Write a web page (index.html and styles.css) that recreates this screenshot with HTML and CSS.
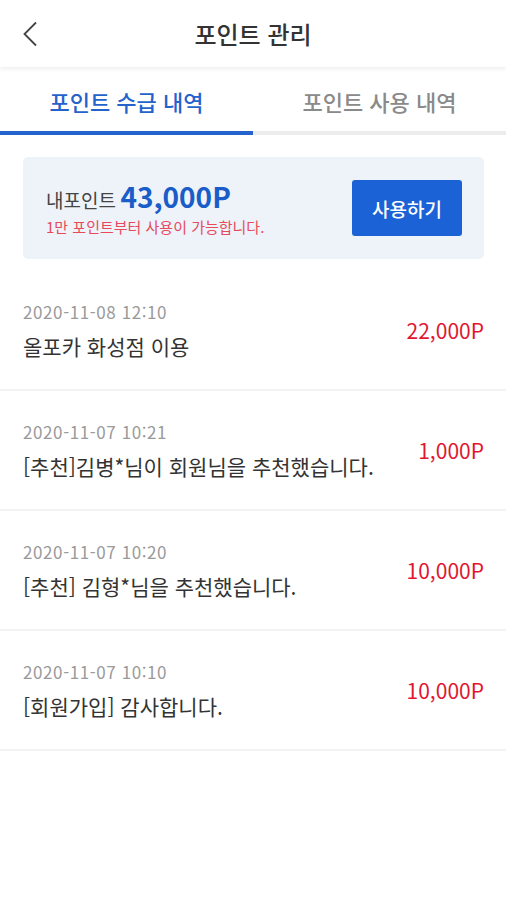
FILE: index.html
```html
<!DOCTYPE html>
<html lang="ko">
<head>
    <meta charset="UTF-8">
    <meta name="viewport" content="width=device-width, initial-scale=1.0">
    <title>포인트 관리</title>
    <link rel="stylesheet" href="styles.css">
</head>
<body>
    <!-- Header -->
    <header class="header">
        <button class="back-btn" aria-label="뒤로">
            <svg width="18" height="26" viewBox="0 0 18 26">
                <path d="M15 1.5 L3.5 13 L15 24.5" fill="none" stroke="#444" stroke-width="1.8"/>
            </svg>
        </button>
        <h1 class="title">포인트 관리</h1>
        <span></span>
    </header>

    <!-- Tabs -->
    <nav class="tabs">
        <div class="tab active">포인트 수급 내역</div>
        <div class="tab">포인트 사용 내역</div>
    </nav>

    <!-- My Point -->
    <section class="point-card">
        <div class="point-info">
            <p class="point-line"><span class="point-label">내포인트</span> <strong class="point-value">43,000P</strong></p>
            <p class="point-notice">1만 포인트부터 사용이 가능합니다.</p>
        </div>
        <button class="use-btn">사용하기</button>
    </section>

    <!-- History -->
    <ul class="history">
        <li class="history-item">
            <div class="item-text">
                <span class="item-date">2020-11-08 12:10</span>
                <span class="item-title">올포카 화성점 이용</span>
            </div>
            <span class="item-amount">22,000P</span>
        </li>
        <li class="history-item">
            <div class="item-text">
                <span class="item-date">2020-11-07 10:21</span>
                <span class="item-title">[추천]김병*님이 회원님을 추천했습니다.</span>
            </div>
            <span class="item-amount">1,000P</span>
        </li>
        <li class="history-item">
            <div class="item-text">
                <span class="item-date">2020-11-07 10:20</span>
                <span class="item-title">[추천] 김형*님을 추천했습니다.</span>
            </div>
            <span class="item-amount">10,000P</span>
        </li>
        <li class="history-item">
            <div class="item-text">
                <span class="item-date">2020-11-07 10:10</span>
                <span class="item-title">[회원가입] 감사합니다.</span>
            </div>
            <span class="item-amount">10,000P</span>
        </li>
    </ul>
</body>
</html>
```

FILE: styles.css
```css
/* Global Styles */
* {
    margin: 0;
    padding: 0;
    box-sizing: border-box;
}
body {
    font-family: "Noto Sans CJK KR", "Noto Sans", sans-serif;
    background: #fff;
    color: #333;
}

/* Header */
.header {
    position: relative;
    z-index: 1;
    display: grid;
    grid-template-columns: 60px 1fr 60px;
    align-items: center;
    height: 67px;
    background: #fff;
    box-shadow: 0 2px 4px rgba(0, 0, 0, 0.07);
}
.back-btn {
    display: flex;
    align-items: center;
    padding-left: 21px;
    height: 100%;
    background: none;
    border: none;
}
.title {
    font-size: 24px;
    font-weight: 500;
    text-align: center;
    color: #333;
}

/* Tabs */
.tabs {
    display: flex;
}
.tab {
    flex: 1;
    height: 68px;
    padding-top: 4px;
    display: flex;
    align-items: center;
    justify-content: center;
    font-size: 22px;
    font-weight: 500;
    color: #8a8a8a;
    border-bottom: 4px solid #ececec;
}
.tab.active {
    color: #2462cc;
    border-bottom-color: #2462cc;
}

/* Point Card */
.point-card {
    display: flex;
    align-items: center;
    justify-content: space-between;
    margin: 22px 22px 0 23px;
    height: 102px;
    padding: 0 22px 0 23px;
    background: #edf3f8;
    border-radius: 5px;
}
.point-line {
    line-height: 32px;
}
.point-label {
    font-size: 19px;
    color: #444;
}
.point-value {
    font-size: 28px;
    font-weight: 700;
    color: #1a5cc8;
}
.point-notice {
    font-size: 15px;
    line-height: 20px;
    color: #e8495c;
}
.use-btn {
    width: 110px;
    height: 56px;
    font-family: inherit;
    font-size: 19px;
    font-weight: 500;
    color: #fff;
    background: #1a62d6;
    border: none;
    border-radius: 3px;
}

/* History List */
.history {
    list-style: none;
    margin-top: 12px;
}
.history-item {
    display: flex;
    align-items: center;
    justify-content: space-between;
    height: 120px;
    padding: 0 22px 0 23px;
    border-bottom: 2px solid #f2f2f2;
}
.item-text {
    display: flex;
    flex-direction: column;
    gap: 8px;
}
.item-date {
    font-size: 17px;
    line-height: 24px;
    color: #9a9a9a;
    letter-spacing: 0.6px;
}
.item-title {
    font-size: 21px;
    line-height: 28px;
    color: #333;
}
.item-amount {
    font-size: 21px;
    color: #e2162f;
}
```
